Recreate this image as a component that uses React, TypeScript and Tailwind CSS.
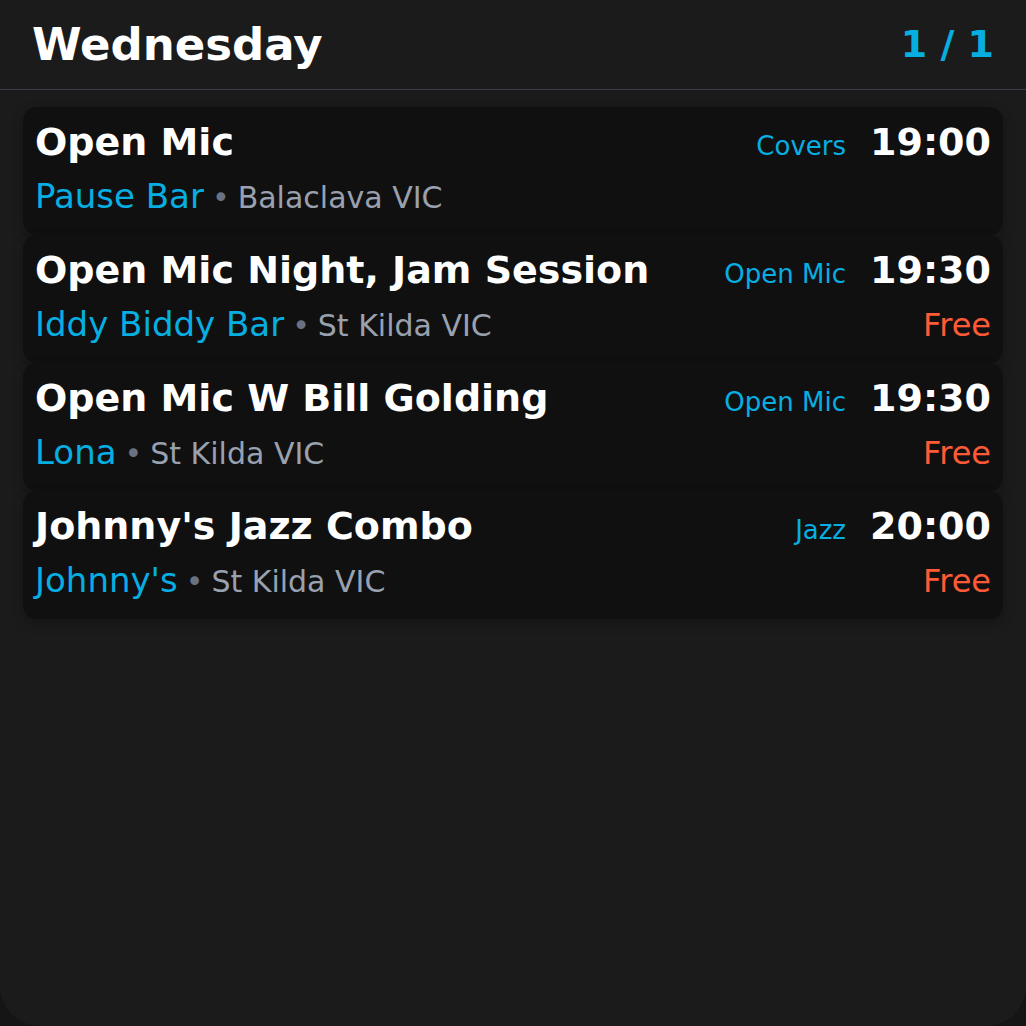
const events = [
  { title: "Open Mic", category: "Covers", time: "19:00", venue: "Pause Bar", place: "Balaclava VIC", price: "" },
  { title: "Open Mic Night, Jam Session", category: "Open Mic", time: "19:30", venue: "Iddy Biddy Bar", place: "St Kilda VIC", price: "Free" },
  { title: "Open Mic W Bill Golding", category: "Open Mic", time: "19:30", venue: "Lona", place: "St Kilda VIC", price: "Free" },
  { title: "Johnny's Jazz Combo", category: "Jazz", time: "20:00", venue: "Johnny's", place: "St Kilda VIC", price: "Free" },
];

function EventCard({ ev }: { ev: (typeof events)[number] }) {
  return (
    <div className="rounded-[14px] bg-[#101010] px-3 pt-[13px] pb-[17px] shadow-[0_4px_12px_rgba(0,0,0,0.25)]">
      <div className="flex items-baseline justify-between">
        <h3 className="text-[38px] leading-[44px] font-bold text-white">{ev.title}</h3>
        <div className="flex items-baseline gap-6">
          <span className="text-[26px] text-[#07aee2]">{ev.category}</span>
          <span className="text-[38px] leading-[44px] font-bold text-white">{ev.time}</span>
        </div>
      </div>
      <div className="mt-[10px] flex items-baseline justify-between leading-[40px]">
        <div className="flex items-baseline">
          <span className="text-[34px] text-[#07aee2]">{ev.venue}</span>
          <span className="mx-[8px] text-[30px] text-gray-500">•</span>
          <span className="text-[30px] text-gray-400">{ev.place}</span>
        </div>
        {ev.price && <span className="text-[32px] text-[#ff5a36]">{ev.price}</span>}
      </div>
    </div>
  );
}

export default function App() {
  return (
    <div className="min-h-screen bg-[#151515]" style={{ fontFamily: '"DejaVu Sans", sans-serif' }}>
      <div className="h-[1026px] w-[1026px] rounded-b-[40px] bg-[#1b1b1b]">
        <header className="flex h-[90px] items-center justify-between border-b border-[#3a3f4a] px-8">
          <h1 className="text-[45px] font-bold text-white">Wednesday</h1>
          <span className="text-[38px] font-bold text-[#07aee2]">1 / 1</span>
        </header>
        <div className="flex flex-col px-[23px] pt-[17px]">
          {events.map((ev) => (
            <EventCard key={ev.title} ev={ev} />
          ))}
        </div>
      </div>
    </div>
  );
}
